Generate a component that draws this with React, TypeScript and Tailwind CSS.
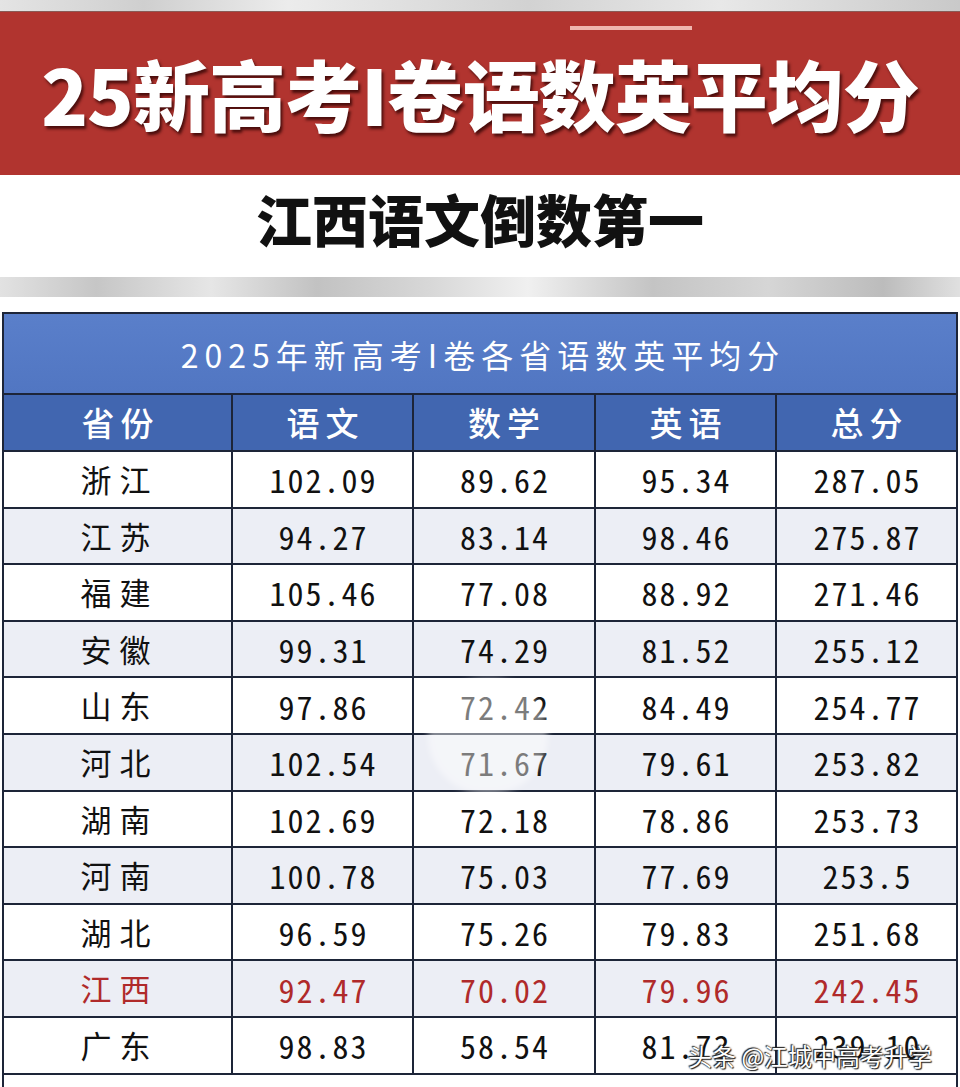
import React from 'react';

type Row = {
  name: string;
  cn: string;
  math: string;
  en: string;
  total: string;
};

// 各省平均分数据
const rows: Row[] = [
  { name: '浙江', cn: '102.09', math: '89.62', en: '95.34', total: '287.05' },
  { name: '江苏', cn: '94.27', math: '83.14', en: '98.46', total: '275.87' },
  { name: '福建', cn: '105.46', math: '77.08', en: '88.92', total: '271.46' },
  { name: '安徽', cn: '99.31', math: '74.29', en: '81.52', total: '255.12' },
  { name: '山东', cn: '97.86', math: '72.42', en: '84.49', total: '254.77' },
  { name: '河北', cn: '102.54', math: '71.67', en: '79.61', total: '253.82' },
  { name: '湖南', cn: '102.69', math: '72.18', en: '78.86', total: '253.73' },
  { name: '河南', cn: '100.78', math: '75.03', en: '77.69', total: '253.5' },
  { name: '湖北', cn: '96.59', math: '75.26', en: '79.83', total: '251.68' },
  { name: '江西', cn: '92.47', math: '70.02', en: '79.96', total: '242.45' },
  { name: '广东', cn: '98.83', math: '58.54', en: '81.73', total: '239.10' },
];

const cols = 'grid grid-cols-[229px_181px_182px_181px_1fr]';

export default function App() {
  return (
    <div className="relative w-[960px] h-[1087px] overflow-hidden bg-white font-['Noto_Sans_CJK_SC','Noto_Sans',sans-serif]">
      {/* blurred strip above banner */}
      <div className="h-[12px] bg-[linear-gradient(90deg,#e4e4e4_0%,#cfcfcf_15%,#ececec_30%,#d2d2d2_55%,#e8e8e8_75%,#c9c9c9_100%)] border-b border-[#8a5a55]" />

      {/* red banner */}
      <div className="h-[163px] bg-[#b1342f] flex flex-col items-center">
        <div className="mt-[14px] ml-[302px] h-[4px] w-[122px] bg-[#efb6ae]" />
        <div className="mt-[24px] text-[77px] leading-none font-black text-white tracking-[-1px] [text-shadow:2px_3px_3px_rgba(40,0,0,0.75)]">
          25新高考I卷语数英平均分
        </div>
      </div>

      {/* subtitle */}
      <div className="h-[102px] flex items-center justify-center pb-[16px]">
        <div className="text-[56px] leading-none font-black text-[#111]">
          江西语文倒数第一
        </div>
      </div>

      {/* gray strip */}
      <div className="h-[20px] bg-[linear-gradient(90deg,#e2e2e2_0%,#c6c6c6_10%,#e6e6e6_22%,#c2c2c2_33%,#d8d8d8_45%,#f0f0f0_55%,#c4c4c4_68%,#d6d6d6_80%,#bcbcbc_92%,#e0e0e0_100%)]" />
      <div className="h-[15px]" />

      {/* table */}
      <div className="ml-[2px] w-[956px] border-x-2 border-t-2 border-[#1d2538] h-[800px]">
        <div className="h-[81px] flex items-center justify-center bg-[linear-gradient(180deg,#5a7fca,#5176c2)] border-b-2 border-[#1d2538]">
          <span className="pl-[6px] text-[32px] text-white tracking-[6px]">
            2025年新高考I卷各省语数英平均分
          </span>
        </div>
        <div className={`${cols} h-[57px] bg-[#4166b0] border-b-2 border-[#1d2538] text-white text-[33px] font-medium tracking-[6px]`}>
          {['省份', '语文', '数学', '英语', '总分'].map((h, i) => (
            <div
              key={h}
              className={`flex items-center justify-center pl-[6px] ${i < 4 ? 'border-r-2 border-[#1d2538]' : ''}`}
            >
              {h}
            </div>
          ))}
        </div>
        {rows.map((r, idx) => {
          const red = r.name === '江西';
          const cells = [r.name, r.cn, r.math, r.en, r.total];
          return (
            <div
              key={r.name}
              className={`${cols} h-[56.6px] border-b-2 border-[#1d2538] ${idx % 2 === 1 ? 'bg-[#eceef5]' : 'bg-white'} ${red ? 'text-[#b02a2a]' : 'text-[#111]'}`}
            >
              {cells.map((c, i) => (
                <div
                  key={i}
                  className={`flex items-center justify-center ${i < 4 ? 'border-r-2 border-[#1d2538]' : ''} ${i === 0 ? 'text-[31px] tracking-[8px] pl-[8px] pr-[4px]' : 'text-[32px] tracking-[2px] pl-[2px] [font-feature-settings:"hwid"]'}`}
                >
                  {c}
                </div>
              ))}
            </div>
          );
        })}
      </div>

      {/* faint circle over the math column */}
      <div className="absolute left-[428px] top-[678px] w-[120px] h-[116px] rounded-full bg-white/45 blur-[3px]" />

      {/* watermark */}
      <div className="absolute left-[688px] top-[1038px] whitespace-nowrap text-[24px] text-white [text-shadow:0_0_2px_#222,1px_1px_1px_#222,-1px_-1px_1px_#222]">
        头条 @江城中高考升学
      </div>
    </div>
  );
}
